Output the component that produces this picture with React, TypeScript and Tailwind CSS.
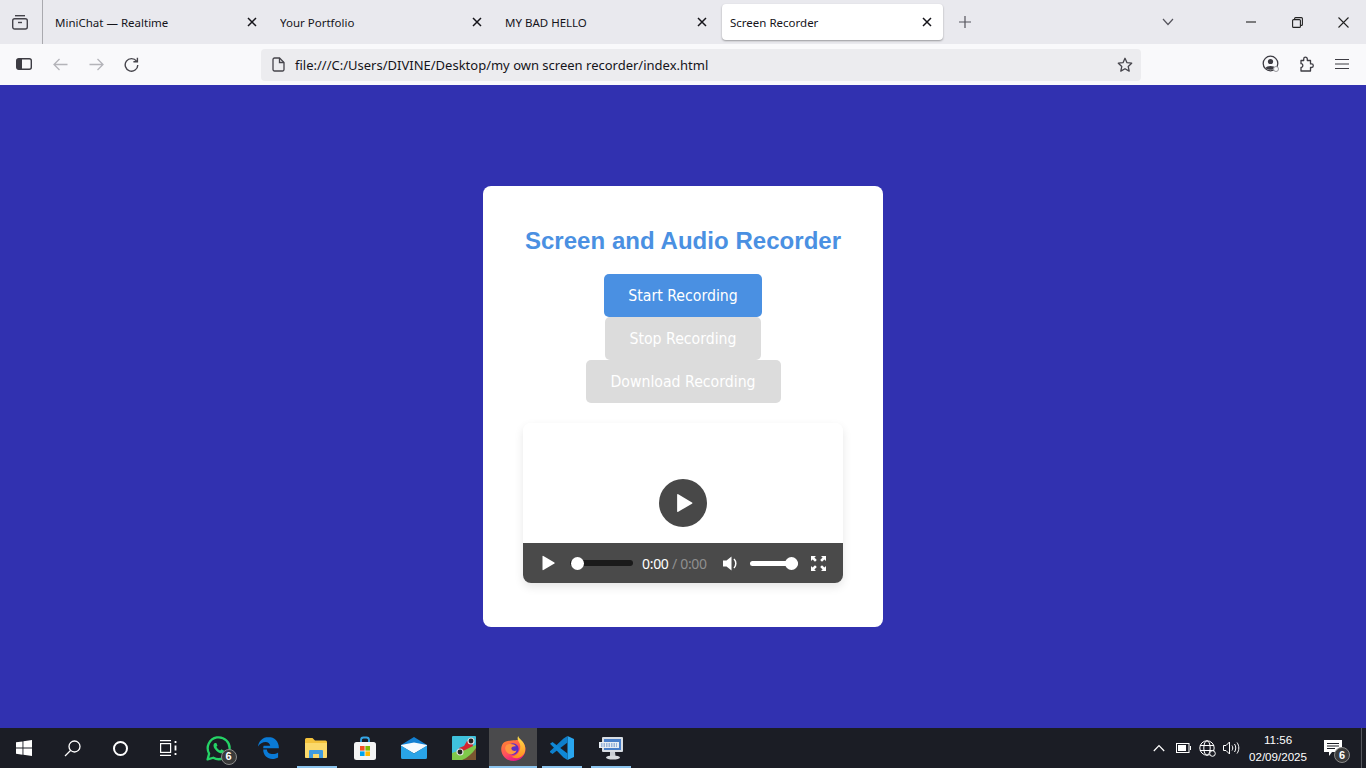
import React from "react";

const uiFont = "font-['Noto_Sans','Liberation_Sans',sans-serif]";

const tabs = [
  { title: "MiniChat — Realtime" },
  { title: "Your Portfolio" },
  { title: "MY BAD HELLO" },
];

const CloseIcon = () => (
  <svg width="10" height="10" viewBox="0 0 10 10" fill="none" stroke="#15141a" strokeWidth="1.5">
    <path d="M1 1l8 8M9 1l-8 8" />
  </svg>
);

const TabBar = () => (
  <div className="flex h-[44px] shrink-0 bg-[#e9e9ee] text-[11.5px] text-[#15141a]">
    <div className="flex h-[44px] w-[43px] items-center justify-center border-r border-[#a9a9ae]">
      <svg className="mr-[2px]" width="18" height="18" viewBox="0 0 18 18" fill="none" stroke="#44434a" strokeWidth="1.4">
        <path d="M4 2.700h10" />
        <rect x="1.700" y="5.700" width="14.600" height="10.300" rx="2" />
        <path d="M7 9.500h4" />
      </svg>
    </div>
    {tabs.map((t) => (
      <div key={t.title} className="flex h-[44px] w-[225px] items-center pl-[12px]">
        <span className="w-[192px] truncate pt-[1px]">{t.title}</span>
        <CloseIcon />
      </div>
    ))}
    <div className="ml-[4px] mt-[4px] flex h-[36px] w-[221px] items-center rounded-[4px] bg-white pl-[8px] shadow-[0_1px_2px_rgba(0,0,0,0.35)]">
      <span className="w-[192px] truncate pt-[1px]">Screen Recorder</span>
      <CloseIcon />
    </div>
    <div className="flex h-[44px] w-[43px] items-center justify-center">
      <svg width="14" height="14" viewBox="0 0 14 14" stroke="#55545c" strokeWidth="1.200">
        <path d="M7 1v12M1 7h12" />
      </svg>
    </div>
    <div className="flex h-[44px] w-[188px] items-center justify-end">
      <svg width="12" height="8" viewBox="0 0 12 8" fill="none" stroke="#55545c" strokeWidth="1.200">
        <path d="M1 1l5 5.500L11 1" />
      </svg>
    </div>
    <div className="ml-auto flex">
      <div className="flex h-[44px] w-[46px] items-center justify-center">
        <svg width="10" height="10" viewBox="0 0 10 10" stroke="#222" strokeWidth="1.100">
          <path d="M0 5h10" />
        </svg>
      </div>
      <div className="flex h-[44px] w-[46px] items-center justify-center">
        <svg width="11" height="11" viewBox="0 0 11 11" fill="none" stroke="#222" strokeWidth="1.100">
          <rect x="0.600" y="2.600" width="7.800" height="7.800" rx="1" />
          <path d="M2.600 2.500V1.600a1 1 0 0 1 1-1h5.800a1 1 0 0 1 1 1v5.800a1 1 0 0 1-1 1h-1" />
        </svg>
      </div>
      <div className="flex h-[44px] w-[46px] items-center justify-center">
        <svg width="11" height="11" viewBox="0 0 11 11" stroke="#222" strokeWidth="1.100">
          <path d="M0.500 0.500l10 10M10.500 0.500l-10 10" />
        </svg>
      </div>
    </div>
  </div>
);

const ToolBar = () => (
  <div className="flex h-[41px] shrink-0 items-center bg-[#f9f9fb]">
    <div className="flex w-[261px] items-center pb-[1px] pl-[16px]">
      <svg width="16" height="12" viewBox="0 0 16 12" fill="none">
        <rect x="0.700" y="0.700" width="14.600" height="10.600" rx="2" stroke="#3d3c43" strokeWidth="1.400" />
        <rect x="1" y="1" width="5" height="10" fill="#3d3c43" />
      </svg>
      <svg className="ml-[21px]" width="15" height="13" viewBox="0 0 15 13" fill="none" stroke="#b4b4b9" strokeWidth="1.300">
        <path d="M14.500 6.500H1M6.500 1L1 6.500 6.500 12" />
      </svg>
      <svg className="ml-[21px]" width="15" height="13" viewBox="0 0 15 13" fill="none" stroke="#b4b4b9" strokeWidth="1.300">
        <path d="M0.500 6.500H14M8.500 1L14 6.500 8.500 12" />
      </svg>
      <svg className="ml-[20px]" width="15" height="15" viewBox="0 0 15 15" fill="none" stroke="#45444b" strokeWidth="1.400">
        <path d="M12.600 4.200A6.300 6.300 0 1 0 13.800 8" />
        <path d="M13.400 0.800v4h-4" />
      </svg>
    </div>
    <div className="flex h-[32px] w-[880px] items-center rounded-[4px] bg-[#ececef] pl-[11px] pr-[8px] text-[13px] text-[#15141a]">
      <svg width="13" height="15" viewBox="0 0 13 15" fill="none" stroke="#45444b" strokeWidth="1.300">
        <path d="M1 2.500A1.500 1.500 0 0 1 2.500 1h5L12 5.500v7a1.500 1.500 0 0 1-1.500 1.500h-8A1.500 1.500 0 0 1 1 12.500z" />
        <path d="M7.500 1v4.500H12" />
      </svg>
      <span className="ml-[10px] pt-[2px]">file:///C:/Users/DIVINE/Desktop/my own screen recorder/index.html</span>
      <svg className="ml-auto" width="16" height="16" viewBox="0 0 16 16" fill="none" stroke="#45444b" strokeWidth="1.300">
        <path d="M8 1.300l2 4.400 4.700.5-3.500 3.200 1 4.700L8 11.700l-4.200 2.400 1-4.700L1.300 6.200 6 5.700z" strokeLinejoin="round" />
      </svg>
    </div>
    <div className="ml-auto flex items-center pb-[1px] pr-[17px]">
      <svg width="18" height="18" viewBox="0 0 18 18" fill="none">
        <circle cx="8.500" cy="8.500" r="7.300" stroke="#3d3c43" strokeWidth="1.300" />
        <circle cx="8.500" cy="6.500" r="2.600" fill="#3d3c43" />
        <path d="M3.500 13c1-2.800 9-2.800 10 0-2 2.400-8 2.400-10 0z" fill="#3d3c43" />
        <circle cx="14" cy="14" r="2.500" fill="#f9f9fb" stroke="#9a9a9f" strokeWidth="1" />
      </svg>
      <svg className="ml-[19px]" width="15" height="16" viewBox="0 0 15 16" fill="none" stroke="#3d3c43" strokeWidth="1.300">
        <path
          d="M2 15h9.500v-3.500h1a1.800 1.800 0 0 0 0-3.600h-1V4.500H8.300V3a1.800 1.800 0 0 0-3.600 0v1.500H2v3.200c2.400-.3 2.400 4 0 3.800z"
          strokeLinejoin="round"
        />
      </svg>
      <svg className="ml-[21px]" width="14" height="12" viewBox="0 0 14 12" stroke="#3d3c43" strokeWidth="1.200">
        <path d="M0 1.500h14M0 6h14M0 10.500h14" />
      </svg>
    </div>
  </div>
);

const PlayIcon = ({ size }: { size: number }) => (
  <svg width={size} height={size} viewBox="0 0 16 16" fill="#fff">
    <path d="M2.500 1.500v13a.6.6 0 0 0 .9.500l11-6.500a.6.6 0 0 0 0-1L3.400 1a.6.6 0 0 0-.9.500z" />
  </svg>
);

const VideoPlayer = () => (
  <div className="mt-[20px] flex w-[320px] flex-col overflow-hidden rounded-[8px] shadow-[0_4px_10px_rgba(0,0,0,0.1)]">
    <div className="flex h-[120px] items-end justify-center bg-white pb-[16px]">
      <div className="flex h-[48px] w-[48px] items-center justify-center rounded-full bg-[#484848] pl-[2px]">
        <PlayIcon size={20} />
      </div>
    </div>
    <div className="flex h-[40px] items-center bg-[#4a4a4a] pl-[17px]">
      <PlayIcon size={16} />
      <div className="relative ml-[14px] h-[6px] w-[63px] rounded-full bg-[#1a1a1a]">
        <div className="absolute left-[1px] top-[-3px] h-[13px] w-[13px] rounded-full bg-white" />
      </div>
      <span className="ml-[9px] w-[70px] whitespace-nowrap text-[14px] tracking-[-0.3px] text-white">
        0:00 <span className="text-[#8f8f8f]">/ 0:00</span>
      </span>
      <svg className="ml-[11px]" width="18" height="17" viewBox="0 0 18 16" fill="#fff">
        <path d="M0 5h3.500L8.500 1v14l-5-4H0z" />
        <path d="M11 3.500c2.400 2.400 2.400 6.600 0 9" fill="none" stroke="#fff" strokeWidth="1.500" />
      </svg>
      <div className="relative ml-[9px] h-[5px] w-[48px] rounded-full bg-white">
        <div className="absolute right-0 top-[-4px] h-[13px] w-[13px] rounded-full bg-white" />
      </div>
      <svg className="ml-[13px]" width="15" height="15" viewBox="0 0 15 15" fill="#fff">
        <path d="M0 0h5L3.400 1.600 5.800 4 4 5.800 1.600 3.400 0 5zM15 0v5l-1.600-1.600L11 5.800 9.200 4l2.400-2.400L10 0zM0 15v-5l1.600 1.600L4 9.200 5.800 11l-2.400 2.400L5 15zM15 15h-5l1.600-1.600L9.200 11l1.800-1.800 2.400 2.400L15 10z" />
      </svg>
    </div>
  </div>
);

const RecorderCard = () => (
  <div className="flex w-[400px] flex-col items-center rounded-[8px] bg-white px-[40px] pb-[44px] pt-[40px]">
    <h1 className="h-[30px] whitespace-nowrap font-['Liberation_Sans',sans-serif] text-[24px] font-bold leading-[30px] tracking-[0.04px] text-[#4a90e2]">
      Screen and Audio Recorder
    </h1>
    <div className="mt-[18px] flex flex-col items-center font-['DejaVu_Sans_Condensed','Noto_Sans',sans-serif] text-[15.7px] text-white">
      <button className="h-[43px] w-[158px] rounded-[5px] bg-[#4a90e2] pt-[1px]">Start Recording</button>
      <button className="h-[43px] w-[156px] rounded-[5px] bg-[#dcdcdc] pt-[1px]">Stop Recording</button>
      <button className="h-[43px] w-[195px] rounded-[5px] bg-[#dcdcdc] pt-[1px]">Download Recording</button>
    </div>
    <VideoPlayer />
  </div>
);

const Slot = ({
  children,
  bar,
  active,
  w,
}: {
  children: React.ReactNode;
  bar?: string;
  active?: boolean;
  w: string;
}) => (
  <div className={`relative flex h-[40px] shrink-0 items-center justify-center ${w} ${active ? "bg-[#4a4a4c]" : ""}`}>
    {children}
    {bar && <div className={`absolute bottom-0 h-[2px] bg-[#8cc4ee] ${bar}`} />}
  </div>
);

const Badge = ({ className }: { className: string }) => (
  <span
    className={`absolute flex h-[16px] w-[16px] items-center justify-center rounded-full border border-[#8a8a8a] bg-[#3a3a3a] text-[11px] font-bold text-white ${className}`}
  >
    6
  </span>
);

const TaskBar = () => (
  <div className="flex h-[40px] shrink-0 items-center bg-[#1b1d25] font-['Liberation_Sans',sans-serif] text-white">
    <Slot w="w-[48px]">
      <svg width="16" height="16" viewBox="0 0 16 16" fill="#fff">
        <path d="M0 2.300l6.500-.9v6.200H0zM7.400 1.300L16 0v7.600H7.400zM0 8.500h6.500v6.200L0 13.800zM7.400 8.500H16V16l-8.600-1.200z" />
      </svg>
    </Slot>
    <Slot w="w-[48px]">
      <svg width="17" height="17" viewBox="0 0 17 17" fill="none" stroke="#fff" strokeWidth="1.300">
        <circle cx="10.500" cy="6.500" r="5.500" />
        <path d="M6.500 10.500L1 16" />
      </svg>
    </Slot>
    <Slot w="w-[48px]">
      <div className="h-[15px] w-[15px] rounded-full border-[2.5px] border-white" />
    </Slot>
    <Slot w="w-[48px]">
      <svg width="17" height="16" viewBox="0 0 17 16" fill="none" stroke="#fff" strokeWidth="1.200">
        <path d="M0 .6h11M0 15.400h11" />
        <rect x="0.600" y="3.600" width="10" height="8.800" />
        <path d="M15.500 1v2M15.500 5.500v5M15.500 13v2" strokeWidth="1.800" />
      </svg>
    </Slot>
    <Slot w="w-[52px]">
      <div className="relative">
        <svg width="25" height="25" viewBox="0 0 24 24" fill="none">
          <path
            d="M1.500 22.500l1.500-5.600A10.500 10.500 0 1 1 7 20.900z"
            stroke="#25d366"
            strokeWidth="2.200"
            strokeLinejoin="round"
          />
          <path
            d="M8.500 6.800c-1.600 1-1.800 3.300.2 6 2 2.700 4.800 4.300 6.800 3.800 1.300-.3 2.200-1.600 1.900-2.500l-2.600-1.400-1.200 1.200c-1.500-.5-3-2.200-3.600-3.600l1-1.200-1.100-2.500z"
            fill="#25d366"
          />
        </svg>
        <Badge className="bottom-[-4px] right-[-6px]" />
      </div>
    </Slot>
    <Slot w="w-[48px]">
      <svg width="21" height="22" viewBox="0 0 21 22">
        <path
          d="M10.500 0C4.500 0 .6 4.500 0 9.500 1.800 6.600 4.700 5 7.600 5c2.300 0 4.300 1.500 4.600 3.800H5.600c-.3 1-.4 1.600-.4 2.500h15.600c.5-6-3.900-11.300-10.300-11.300zM5.200 12.500c0 6 4.500 9.500 9 9.500 2.500 0 4.500-.6 5.900-1.500v-5c-1.500 1-3.300 1.600-5.300 1.600-3.200 0-5.800-1.600-5.900-4.600z"
          fill="#0a7ad6"
        />
      </svg>
    </Slot>
    <Slot w="w-[48px]" bar="left-[5px] right-[3px]">
      <svg width="22" height="20" viewBox="0 0 22 20">
        <path d="M0 1.500A1.500 1.500 0 0 1 1.500 0h6L10 2.500h10.500A1.500 1.500 0 0 1 22 4v14.500a1.500 1.500 0 0 1-1.500 1.500h-19A1.500 1.500 0 0 1 0 18.500z" fill="#f3c23c" />
        <path d="M0 5h22v13.500a1.500 1.500 0 0 1-1.500 1.500h-19A1.500 1.500 0 0 1 0 18.500z" fill="#fbd96b" />
        <path d="M4 20v-7a1 1 0 0 1 1-1h12a1 1 0 0 1 1 1v7h-4v-4H8v4z" fill="#3f9be0" />
      </svg>
    </Slot>
    <Slot w="w-[50px]">
      <svg width="24" height="24" viewBox="0 0 24 24">
        <path d="M8 7V4a2.500 2.500 0 0 1 2.500-2.500h3A2.500 2.500 0 0 1 16 4v3" fill="none" stroke="#35a7e8" strokeWidth="1.800" />
        <rect x="1" y="6" width="22" height="18" rx="2.500" fill="#f4f4f4" />
        <rect x="7" y="10" width="4.600" height="4.600" fill="#f25022" />
        <rect x="12.400" y="10" width="4.600" height="4.600" fill="#7fba00" />
        <rect x="7" y="15.400" width="4.600" height="4.600" fill="#00a4ef" />
        <rect x="12.400" y="15.400" width="4.600" height="4.600" fill="#ffb900" />
      </svg>
    </Slot>
    <Slot w="w-[48px]">
      <svg width="26" height="22" viewBox="0 0 26 22">
        <path d="M0 8L13 0l13 8z" fill="#1380d2" />
        <path d="M0 8l13-2.500L26 8v1L13 16.500 0 9z" fill="#f4fafe" />
        <path d="M0 8.500l13 8 13-8v12a1.500 1.500 0 0 1-1.500 1.500h-23A1.500 1.500 0 0 1 0 20.500z" fill="#29a4e8" />
      </svg>
    </Slot>
    <Slot w="w-[51px]">
      <svg width="24" height="24" viewBox="0 0 24 24">
        <rect width="24" height="24" rx="1" fill="#3fc1dc" />
        <path d="M0 17L24 9v15H0z" fill="#7fc84a" />
        <path d="M10 24c5-2 10-6 14-12v12z" fill="#7a5630" />
        <path d="M7 12l5-2 3-5 5 1 1 4-8 4-5 2z" fill="#d3252f" />
        <circle cx="8" cy="16" r="3" fill="#222" stroke="#ddd" strokeWidth="1.200" />
        <circle cx="19" cy="5" r="3" fill="#222" stroke="#ddd" strokeWidth="1.200" />
      </svg>
    </Slot>
    <Slot w="w-[48px]" active bar="left-0 right-0">
      <svg width="25" height="25" viewBox="0 0 24 24">
        <defs>
          <linearGradient id="ffBody" x1="0" y1="0" x2="0.600" y2="1">
            <stop offset="0" stopColor="#ff8a2b" />
            <stop offset="0.600" stopColor="#ff4f5e" />
            <stop offset="1" stopColor="#e31587" />
          </linearGradient>
          <linearGradient id="ffFlame" x1="0.500" y1="0" x2="0.500" y2="1">
            <stop offset="0" stopColor="#ffe14d" />
            <stop offset="1" stopColor="#ff8a1f" />
          </linearGradient>
        </defs>
        <path d="M2 7c-2 3-2 6-1.500 8C2 20.500 6.500 24 12 24c6.500 0 11.500-5 11.500-11.500C23.500 7 19 3 14 4 8 4 4 5 2 7z" fill="url(#ffBody)" />
        <path d="M16.500 0c-1 2-.5 4 .5 5.500 2 3 2 6 .5 9-1.500 3-4 5-7.500 5.500 5 3 11.500.5 13-5 1-4-.5-8-3-10.500C18.500 3 17 2 16.500 0z" fill="url(#ffFlame)" />
        <circle cx="11.500" cy="12.500" r="5.500" fill="#5b2fc4" />
        <path d="M5.500 8.500c3-1.500 7.500-1 9 1.500-2-.5-5 .5-4.500 2.500.5 1.700 3 2.300 5 1.500-1 2.500-3 3.500-5 3.500-3 0-5.500-2-6-5-.2-1.500.5-3 1.500-4z" fill="#ff9640" />
      </svg>
    </Slot>
    <Slot w="w-[49px]" bar="left-[5px] right-[4px]">
      <svg width="24" height="24" viewBox="0 0 24 24">
        <path d="M17.500 0L24 3v18l-6.500 3V0z" fill="#29a6ef" />
        <path d="M17.500 0v6.500L7 14.500 2.500 18 0 16.300v-1L13.500 2.500z" fill="#0e7fcb" />
        <path d="M0 7.700L2.500 6 7 9.500 17.500 17.500V24l-4-2.500z" fill="#0f88d6" />
      </svg>
    </Slot>
    <Slot w="w-[49px]" bar="left-[5px] right-[4px]">
      <svg width="24" height="24" viewBox="0 0 24 24">
        <rect x="3" y="1" width="21" height="15" rx="1" fill="#d8dde3" />
        <rect x="5" y="3" width="17" height="11" fill="#4a7fc8" />
        <rect x="0" y="6" width="20" height="6" fill="#e8edf3" />
        <path d="M2 8h16M2 10h16" stroke="#4f7fbf" strokeWidth="1" strokeDasharray="1.500 1" />
        <path d="M11 16h5l.5 4H11z" fill="#c8cdd3" />
        <ellipse cx="14" cy="21.500" rx="7" ry="2" fill="#d6dade" />
      </svg>
    </Slot>

    <div className="ml-auto flex items-center">
      <svg width="12" height="8" viewBox="0 0 12 8" fill="none" stroke="#fff" strokeWidth="1.200">
        <path d="M.8 7L6 1.500 11.200 7" />
      </svg>
      <svg className="ml-[11px]" width="15" height="10" viewBox="0 0 15 10" fill="none" stroke="#fff">
        <rect x="0.500" y="0.500" width="12.500" height="9" />
        <rect x="2" y="2" width="8" height="6" fill="#fff" stroke="none" />
        <path d="M14.500 3v4" />
      </svg>
      <svg className="ml-[8px]" width="17" height="17" viewBox="0 0 17 17" fill="none" stroke="#fff" strokeWidth="1">
        <circle cx="8" cy="8" r="7.200" />
        <ellipse cx="8" cy="8" rx="3.200" ry="7.200" />
        <path d="M1 5.500h14M1 10.500h14" />
        <circle cx="13.500" cy="13.500" r="2.800" fill="#1b1d25" />
      </svg>
      <svg className="ml-[7px]" width="17" height="14" viewBox="0 0 17 14" fill="none" stroke="#fff" strokeWidth="1">
        <path d="M.5 4.500h2.500L6.500 1v12L3 9.500H.5zM9 4.500c1 1.500 1 3.500 0 5M11.500 3c1.700 2.400 1.700 5.600 0 8M14 1.500c2.400 3.300 2.400 7.700 0 11" />
      </svg>
      <div className="ml-[1px] flex w-[74px] flex-col items-center text-[11.6px] leading-[17px]">
        <span>11:56</span>
        <span>02/09/2025</span>
      </div>
      <div className="relative flex h-[40px] w-[36px] items-center justify-center">
        <svg width="18" height="16" viewBox="0 0 18 16" fill="#fff">
          <path d="M0 0h18v12H8l-3 4v-4H0z" />
          <path d="M3 3.500h12M3 6h12M3 8.500h8" stroke="#1b1d25" strokeWidth="1" />
        </svg>
        <Badge className="bottom-[5px] right-[1px]" />
      </div>
      <div className="ml-[10px] mr-[4px] h-[40px] w-[1px] bg-[#55575e]" />
    </div>
  </div>
);

export default function App() {
  return (
    <div className={`flex h-screen w-full flex-col overflow-hidden ${uiFont}`}>
      <TabBar />
      <ToolBar />
      <main className="flex flex-1 items-center justify-center bg-[#3131b0]">
        <RecorderCard />
      </main>
      <TaskBar />
    </div>
  );
}
